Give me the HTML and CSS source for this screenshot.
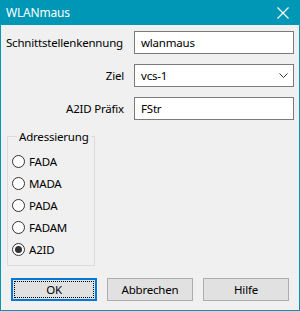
FILE: index.html
```html
<!DOCTYPE html>
<html lang="de">
<head>
    <meta charset="UTF-8">
    <meta name="viewport" content="width=device-width, initial-scale=1.0">
    <title>WLANmaus</title>
    <link rel="stylesheet" href="styles.css">
</head>
<body>
    <div class="window">
        <div class="titlebar">
            <span class="title">WLANmaus</span>
            <svg class="close" width="12" height="12" viewBox="0 0 12 12">
                <path d="M0.5 0.5 L11.5 11.5 M11.5 0.5 L0.5 11.5" stroke="#fff" stroke-width="1.2" fill="none"/>
            </svg>
        </div>
        <div class="content">
            <div class="form">
                <label for="iface">Schnittstellenkennung</label>
                <input type="text" id="iface" value="wlanmaus">

                <label>Ziel</label>
                <div class="select">
                    <span>vcs-1</span>
                    <svg width="9" height="5" viewBox="0 0 9 5">
                        <path d="M0.5 0.5 L4.5 4.5 L8.5 0.5" stroke="#333" stroke-width="1" fill="none"/>
                    </svg>
                </div>

                <label for="prefix">A2ID Präfix</label>
                <input type="text" id="prefix" value="FStr">
            </div>

            <fieldset class="group">
                <legend>Adressierung</legend>
                <label class="radio"><input type="radio" name="addr"> FADA</label>
                <label class="radio"><input type="radio" name="addr"> MADA</label>
                <label class="radio"><input type="radio" name="addr"> PADA</label>
                <label class="radio"><input type="radio" name="addr"> FADAM</label>
                <label class="radio"><input type="radio" name="addr" checked> A2ID</label>
            </fieldset>

            <div class="buttons">
                <button class="default"><span class="focus">OK</span></button>
                <button>Abbrechen</button>
                <button>Hilfe</button>
            </div>
        </div>
    </div>
</body>
</html>
```

FILE: styles.css
```css
body {
    margin: 0;
    font-family: "Noto Sans", "Open Sans", sans-serif;
    font-size: 11.5px;
    letter-spacing: -0.2px;
    color: #000;
    background: #f0f0f0;
}
.window {
    width: 300px;
    height: 311px;
    box-sizing: border-box;
    border: 1px solid #0097b6;
    border-top: 0;
    background: #f0f0f0;
    display: flex;
    flex-direction: column;
}
.titlebar {
    height: 25px;
    margin: 0 -1px;
    background: #0097b6;
    color: #fff;
    display: flex;
    align-items: center;
    justify-content: space-between;
    padding: 0 11px 0 6px;
}
.title {
    font-size: 12px;
}
.close {
    display: block;
}
.content {
    padding: 6px 5px 0 5px;
}
.form {
    display: grid;
    grid-template-columns: 118px 160px;
    grid-auto-rows: 23px;
    column-gap: 10px;
    row-gap: 10px;
    align-items: center;
}
.form label {
    text-align: right;
}
.form label:first-child {
    text-align: left;
}
.form input, .select {
    height: 23px;
    box-sizing: border-box;
    border: 1px solid #7a7a7a;
    background: #fff;
    font: inherit;
    letter-spacing: inherit;
    padding: 0 6px;
    margin: 0;
}
.select {
    display: flex;
    align-items: center;
    justify-content: space-between;
    border-color: #7a7a7a;
    padding-right: 5px;
}
.group {
    margin: 9px 0 0 1px;
    width: 88px;
    box-sizing: border-box;
    border: 1px solid #dcdcdc;
    padding: 6px 0 5px 4px;
}
.group legend {
    padding: 0 2px;
    margin-left: 5px;
    line-height: 15px;
}
.radio {
    display: flex;
    align-items: center;
    height: 22px;
    gap: 4px;
}
.radio input {
    appearance: none;
    margin: 0;
    width: 13px;
    height: 13px;
    border: 1px solid #333;
    border-radius: 50%;
    background: #fff;
    box-sizing: border-box;
    display: grid;
    place-content: center;
}
.radio input:checked::before {
    content: "";
    width: 7px;
    height: 7px;
    border-radius: 50%;
    background: #333;
}
.buttons {
    display: flex;
    gap: 10px;
    margin: 12px 0 0 5px;
}
.buttons button {
    width: 86px;
    height: 23px;
    box-sizing: border-box;
    border: 1px solid #adadad;
    background: #e1e1e1;
    font: inherit;
    letter-spacing: inherit;
    color: #000;
    padding: 0;
}
.buttons button.default {
    border: 2px solid #0078d7;
    padding: 1px;
}
.focus {
    display: flex;
    align-items: center;
    justify-content: center;
    height: 100%;
    box-sizing: border-box;
    border: 1px dotted #000;
}
```
